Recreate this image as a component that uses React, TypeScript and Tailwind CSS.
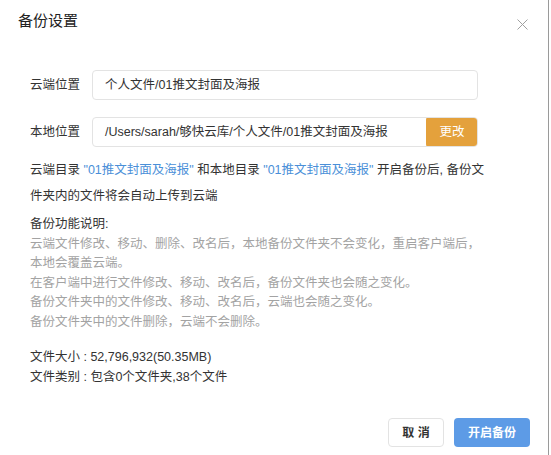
import React from "react";

const font = { fontFamily: '"Liberation Sans","Noto Sans CJK SC",sans-serif' };

export default function App() {
  return (
    <div className="w-[551px] h-[455px] bg-white relative overflow-hidden" style={font}>
      <div className="absolute right-[2px] top-0 bottom-0 w-px bg-[#9a9a9a]" />
      <div className="flex items-start justify-between pl-[18px] pr-[23px] pt-[10px] h-[42px]">
        <div className="text-[15px] leading-[22px] text-[#222]">备份设置</div>
        <svg width="11" height="11" viewBox="0 0 11 11" className="mt-[9px]">
          <path d="M0.5 0.5L10.5 10.5M10.5 0.5L0.5 10.5" stroke="#a0a0a0" strokeWidth="1" />
        </svg>
      </div>
      <div className="pl-[30px] pr-[73px] pt-[28px] text-[12.5px] text-[#333]">
        <div className="flex items-center h-[30px]">
          <div className="w-[62px] shrink-0">云端位置</div>
          <div className="flex-1 h-[30px] border border-[#e3e3e3] rounded-[4px] flex items-center pl-[12px]">
            个人文件/01推文封面及海报
          </div>
        </div>
        <div className="flex items-center h-[30px] mt-[17px]">
          <div className="w-[62px] shrink-0">本地位置</div>
          <div className="flex-1 h-[30px] border border-[#e3e3e3] rounded-[4px] flex items-center pl-[12px] overflow-hidden">
            <span className="flex-1">/Users/sarah/够快云库/个人文件/01推文封面及海报</span>
            <div className="w-[52px] h-[30px] -mr-px bg-[#e4a13c] rounded-[3px] text-white flex items-center justify-center">更改</div>
          </div>
        </div>
        <div className="mt-[10px] leading-[26px] whitespace-nowrap">
          <div>
            云端目录 <span className="text-[#4a8fd8]">"01推文封面及海报"</span> 和本地目录{" "}
            <span className="text-[#4a8fd8]">"01推文封面及海报"</span> 开启备份后, 备份文
          </div>
          <div>件夹内的文件将会自动上传到云端</div>
        </div>
        <div className="mt-[6px] leading-[19.5px] whitespace-nowrap">
          <div>备份功能说明:</div>
          <div className="text-[#a3a3a3]">
            <div>云端文件修改、移动、删除、改名后，本地备份文件夹不会变化，重启客户端后，</div>
            <div>本地会覆盖云端。</div>
            <div>在客户端中进行文件修改、移动、改名后，备份文件夹也会随之变化。</div>
            <div>备份文件夹中的文件修改、移动、改名后，云端也会随之变化。</div>
            <div>备份文件夹中的文件删除，云端不会删除。</div>
          </div>
        </div>
        <div className="mt-[16px] leading-[19.5px]">
          <div>文件大小 : 52,796,932(50.35MB)</div>
          <div>文件类别 : 包含0个文件夹,38个文件</div>
        </div>
      </div>
      <div className="absolute right-[21px] bottom-[8px] flex gap-[10px]">
        <button className="w-[56px] h-[29px] border border-[#e3e3e3] rounded-[4px] text-[12px] text-[#333] font-bold">取 消</button>
        <button className="w-[76px] h-[29px] bg-[#5d9be6] rounded-[4px] text-[12px] text-white font-bold">开启备份</button>
      </div>
    </div>
  );
}
